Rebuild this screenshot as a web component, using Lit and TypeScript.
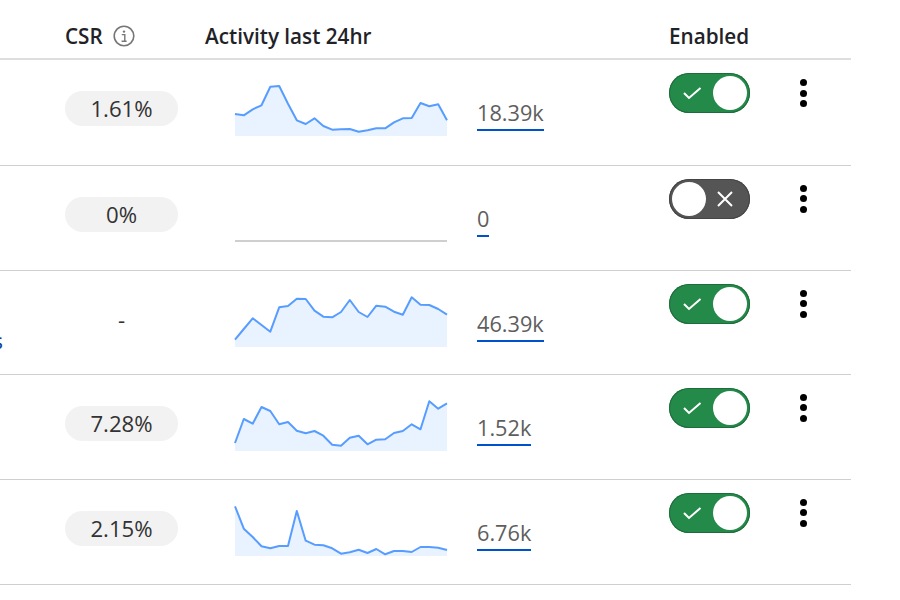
import { LitElement, html, css, svg } from "lit";
import { customElement, property } from "lit/decorators.js";

interface Row {
  height: number;
  name?: string;
  csr: string;
  value: string;
  enabled: boolean;
  // line heights read off the chart, in px above its bottom edge
  points: number[];
}

const STEP = 212 / 24;
const CHART_H = 62;

const rows: Row[] = [
  {
    height: 105.5,
    csr: "1.61%",
    value: "18.39k",
    enabled: true,
    points: [22, 20.7, 26.7, 30.7, 49.3, 50, 32.3, 15.7, 12, 17.7, 10, 6.3, 6.7, 7, 4.3, 5.7, 7.7, 7.7, 13.7, 17.7, 18, 33, 29.7, 31.7, 15.7],
  },
  {
    height: 105,
    csr: "0%",
    value: "0",
    enabled: false,
    points: [],
  },
  {
    height: 104,
    name: "s",
    csr: "-",
    value: "46.39k",
    enabled: true,
    points: [7.3, 18, 28.7, 22, 15.3, 39.7, 41, 48.3, 48, 36.3, 30.3, 29.7, 35, 47, 35, 30, 41.3, 40.3, 35.3, 32.3, 49.7, 42.3, 42, 38, 32.3],
  },
  {
    height: 105,
    csr: "7.28%",
    value: "1.52k",
    enabled: true,
    points: [8, 32, 27.3, 44, 40, 26.7, 29, 20.3, 17.7, 20, 15.3, 6.3, 5.3, 13.3, 15.3, 6.7, 11.3, 11.7, 18, 20, 26.7, 21.7, 49.7, 42.3, 47.7],
  },
  {
    height: 105.5,
    csr: "2.15%",
    value: "6.76k",
    enabled: true,
    points: [49.7, 27.3, 19, 9.7, 7.7, 10, 10, 45, 15.3, 11.3, 10.7, 7.7, 2.3, 3.7, 6.3, 3, 7, 1.7, 5, 5, 4, 9, 9, 8.3, 6],
  },
];

@customElement("spark-line")
class SparkLine extends LitElement {
  static styles = css`
    :host {
      display: block;
      width: 212px;
      height: ${CHART_H}px;
    }
    svg {
      display: block;
      overflow: visible;
    }
    .area {
      fill: #e9f2ff;
    }
    .line {
      fill: none;
      stroke: #579dff;
      stroke-width: 2;
      stroke-linejoin: round;
    }
    .flat {
      stroke: #cfcfcf;
      stroke-width: 2;
    }
  `;

  @property({ type: Array }) points: number[] = [];

  render() {
    const pts = this.points.map((p, i) => `${(i * STEP).toFixed(1)},${CHART_H - p}`);
    return html`
      <svg width="212" height=${CHART_H} viewBox="0 0 212 ${CHART_H}">
        ${pts.length
          ? svg`
              <polygon class="area" points="0,${CHART_H} ${pts.join(" ")} 212,${CHART_H}"></polygon>
              <polyline class="line" points=${pts.join(" ")}></polyline>
            `
          : svg`<line class="flat" x1="0" x2="212" y1=${CHART_H - 1} y2=${CHART_H - 1}></line>`}
      </svg>
    `;
  }
}

@customElement("app-root")
class AppRoot extends LitElement {
  static styles = css`
    :host {
      display: block;
      width: 851px;
      font-family: "Open Sans", "Noto Sans", sans-serif;
      color: #333;
      background: #fff;
    }
    .row {
      display: grid;
      grid-template-columns: 65px 140px 464px 1fr;
      box-sizing: border-box;
      border-bottom: 1px solid #cfcfcf;
    }
    .head {
      height: 60px;
      border-bottom: 2px solid #dedede;
      font-size: 20.7px;
      font-weight: 600;
      color: #1f2328;
      align-items: start;
      padding-top: 22px;
      line-height: 28px;
    }
    .csr-head {
      display: flex;
      align-items: center;
      gap: 10px;
    }
    .info {
      display: block;
    }
    .name {
      width: 3px;
      direction: rtl;
      white-space: nowrap;
      font-size: 22px;
      line-height: 28px;
      color: #0c3fa0;
      padding-top: 55px;
    }
    .pill {
      margin-top: 31px;
      width: 113px;
      height: 35px;
      border-radius: 18px;
      background: #f2f2f2;
      display: flex;
      align-items: center;
      justify-content: center;
      font-size: 22.2px;
    }
    .pill.none {
      background: none;
    }
    .activity {
      display: flex;
      align-items: flex-start;
      padding-left: 30px;
    }
    .activity spark-line {
      margin-top: 14px;
    }
    .value {
      margin: 37px 0 0 30px;
      font-size: 21.7px;
      line-height: 32px;
      color: #5e5e5e;
      border-bottom: 2px solid #0052cc;
      height: 32px;
    }
    .controls {
      display: flex;
      align-items: flex-start;
    }
    .switch {
      margin-top: 13px;
      box-sizing: border-box;
      width: 81px;
      height: 40px;
      border-radius: 20px;
      padding: 3px;
      display: flex;
      align-items: center;
      justify-content: space-between;
      background: #248a4a;
      box-shadow: inset 0 0 0 1px #1f6b3c;
    }
    .switch.off {
      background: #555;
      flex-direction: row-reverse;
      box-shadow: inset 0 0 0 1px #444;
    }
    .knob {
      width: 34px;
      height: 34px;
      border-radius: 50%;
      background: #fff;
    }
    .mark {
      display: block;
      margin-left: 10px;
    }
    .off .mark {
      margin: 0 13px 0 0;
    }
    .more {
      margin: 19px 0 0 50px;
      display: flex;
      flex-direction: column;
      gap: 3.5px;
    }
    .more span {
      width: 7px;
      height: 7px;
      border-radius: 50%;
      background: #000;
    }
  `;

  renderRow(r: Row) {
    return html`
      <div class="row" style="height:${r.height}px">
        <div class="name">${r.name ?? ""}</div>
        <div class="pill ${r.csr === "-" ? "none" : ""}">${r.csr}</div>
        <div class="activity">
          <spark-line .points=${r.points}></spark-line>
          <a class="value">${r.value}</a>
        </div>
        <div class="controls">
          <div class="switch ${r.enabled ? "" : "off"}">
            ${r.enabled
              ? html`<svg class="mark" width="20" height="14" viewBox="0 0 20 14">
                  <path d="M2 7l5 5L18.5 2" fill="none" stroke="#fff" stroke-width="2"></path>
                </svg>`
              : html`<svg class="mark" width="18" height="18" viewBox="0 0 18 18">
                  <path d="M2 2l14 14M16 2L2 16" fill="none" stroke="#fff" stroke-width="2"></path>
                </svg>`}
            <div class="knob"></div>
          </div>
          <div class="more"><span></span><span></span><span></span></div>
        </div>
      </div>
    `;
  }

  render() {
    return html`
      <div class="row head">
        <div></div>
        <div class="csr-head">
          CSR
          <svg class="info" width="22" height="22" viewBox="0 0 22 22">
            <circle cx="11" cy="11" r="9.8" fill="none" stroke="#777" stroke-width="1.6"></circle>
            <circle cx="11" cy="6.6" r="1.2" fill="#777"></circle>
            <path d="M8.8 9.6h3v6.4M8.6 16.2h5" fill="none" stroke="#777" stroke-width="1.4"></path>
          </svg>
        </div>
        <div>Activity last 24hr</div>
        <div>Enabled</div>
      </div>
      ${rows.map((r) => this.renderRow(r))}
    `;
  }
}
